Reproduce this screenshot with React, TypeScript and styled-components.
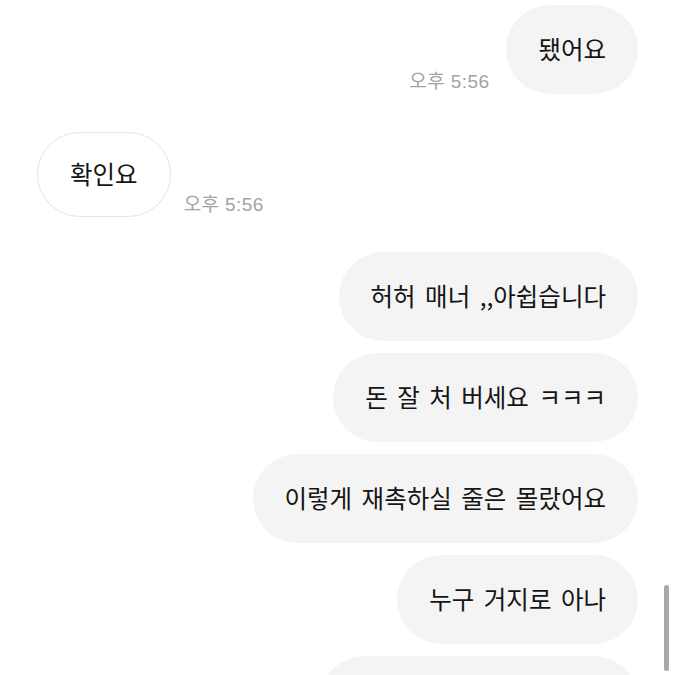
import React from "react";
import styled, { createGlobalStyle } from "styled-components";

const Global = createGlobalStyle`
  html, body { margin: 0; padding: 0; background: #ffffff; }
  body { font-family: "Noto Sans CJK KR", "Noto Sans", sans-serif; overflow: hidden; }
`;

const Screen = styled.div`
  position: relative;
  width: 675px;
  height: 675px;
  overflow: hidden;
  background: #fff;
`;

const Thread = styled.div`
  display: flex;
  flex-direction: column;
  padding: 5px 37px 0 37px;
`;

const Row = styled.div<{ $mine?: boolean; $gap: number }>`
  display: flex;
  flex-direction: ${(p) => (p.$mine ? "row-reverse" : "row")};
  align-items: flex-end;
  gap: ${(p) => (p.$mine ? 17 : 13)}px;
  margin-top: ${(p) => p.$gap}px;
`;

const Bubble = styled.div<{ $mine?: boolean }>`
  box-sizing: border-box;
  height: ${(p) => (p.$mine ? 89 : 85)}px;
  display: flex;
  align-items: center;
  padding: 0 32px;
  border-radius: 45px;
  font-size: 24.5px;
  word-spacing: 4px;
  line-height: 1;
  color: #151515;
  white-space: nowrap;
  background: ${(p) => (p.$mine ? "#f4f4f4" : "#ffffff")};
  border: ${(p) => (p.$mine ? "none" : "1.5px solid #e4e4e4")};
`;

const Time = styled.span`
  font-family: "Liberation Sans", "Noto Sans CJK KR", sans-serif;
  font-size: 19px;
  letter-spacing: 0.4px;
  color: #a3a3a3;
  margin-bottom: 1px;
  white-space: nowrap;
`;

const Scrollbar = styled.div`
  position: absolute;
  right: 6px;
  top: 585px;
  width: 5px;
  height: 86px;
  border-radius: 3px;
  background: #a8a8a8;
`;

type Msg = { text: string; mine?: boolean; time?: string; gap: number };

const messages: Msg[] = [
  { text: "됐어요", mine: true, time: "오후 5:56", gap: 0 },
  { text: "확인요", time: "오후 5:56", gap: 38 },
  { text: "허허 매너 ,,아쉽습니다", mine: true, gap: 35 },
  { text: "돈 잘 처 버세요 ㅋㅋㅋ", mine: true, gap: 12 },
  { text: "이렇게 재촉하실 줄은 몰랐어요", mine: true, gap: 12 },
  { text: "누구 거지로 아나", mine: true, gap: 12 },
  { text: "\u00a0", mine: true, gap: 12 },
];

export default function App() {
  return (
    <Screen>
      <Global />
      <Thread>
        {messages.map((m, i) => (
          <Row key={i} $mine={m.mine} $gap={m.gap}>
            <Bubble $mine={m.mine} style={i === 6 ? { width: 318 } : undefined}>
              {m.text}
            </Bubble>
            {m.time && <Time>{m.time}</Time>}
          </Row>
        ))}
      </Thread>
      <Scrollbar />
    </Screen>
  );
}
